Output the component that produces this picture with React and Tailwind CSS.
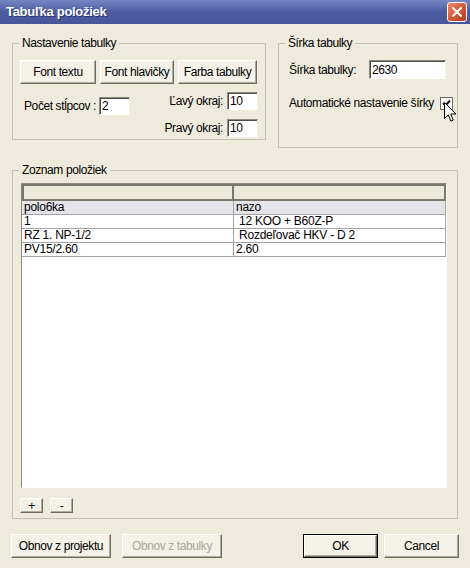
import React from 'react'

const FONT = "font-['Liberation_Sans',Arial,sans-serif]"

function Btn({ children, className = '', disabled, isDefault }) {
  const base =
    'flex items-center justify-center bg-[#f3f1e8] border border-t-white border-l-white border-b-[#6e6c61] border-r-[#6e6c61] shadow-[inset_-1px_-1px_0_#aeab9c]'
  const text = disabled ? 'text-[#a9a698]' : 'text-black'
  if (isDefault) {
    return (
      <div className={`border border-black ${className}`}>
        <button className={`${base} ${text} w-full h-full`}>{children}</button>
      </div>
    )
  }
  return <button className={`${base} ${text} ${className}`}>{children}</button>
}

function TextInput({ value, className = '' }) {
  return (
    <div
      className={`bg-white border border-t-[#8d8b7f] border-l-[#8d8b7f] border-b-white border-r-[#f4f3ee] shadow-[inset_1px_1px_0_#4e4d46] pl-[2px] flex items-center leading-[14px] ${className}`}
    >
      {value}
    </div>
  )
}

function GroupBox({ title, className = '', children }) {
  return (
    <fieldset className={`border border-[#c2bfae] ${className}`}>
      <legend className="ml-[6px] px-[3px] leading-[14px]">{title}</legend>
      {children}
    </fieldset>
  )
}

const rows = [
  ['polo6ka', 'nazo'],
  ['1', ' 12 KOO + B60Z-P'],
  ['RZ 1. NP-1/2', ' Rozdeľovač HKV - D 2'],
  ['PV15/2.60', '2.60'],
]

export default function App() {
  return (
    <div
      className={`relative w-[470px] h-[568px] overflow-hidden bg-[#eeebdc] flex flex-col ${FONT} text-[12px] tracking-[-0.4px] text-black`}
    >
      {/* Title bar */}
      <div className="h-[24px] shrink-0 flex items-center justify-between pl-[6px] pr-[3px] bg-gradient-to-b from-[#7685c3] via-[#4e5da2] to-[#46549a]">
        <span className="text-white font-bold text-[13px] tracking-[-0.3px] [text-shadow:1px_1px_0_#2b3570]">
          Tabuľka položiek
        </span>
        <button className="w-[20px] h-[20px] rounded-[3px] border border-white bg-gradient-to-br from-[#e98b6c] via-[#d55a3a] to-[#b8391f] flex items-center justify-center">
          <svg width="12" height="12" viewBox="0 0 12 12">
            <path d="M2 2l8 8M10 2l-8 8" stroke="white" strokeWidth="2" strokeLinecap="round" />
          </svg>
        </button>
      </div>

      {/* Top group boxes */}
      <div className="flex items-start gap-[12px] px-[12px] mt-[12px]">
        <GroupBox title="Nastavenie tabulky" className="w-[254px] h-[104px]">
          <div className="pl-[7px] pr-[7px] pt-[10px]">
            <div className="flex gap-[4px]">
              <Btn className="w-[76px] h-[24px]">Font textu</Btn>
              <Btn className="w-[74px] h-[24px]">Font hlavičky</Btn>
              <Btn className="w-[79px] h-[24px]">Farba tabulky</Btn>
            </div>
            <div className="flex items-start mt-[8px]">
              <div className="flex items-center mt-[5px] ml-[4px]">
                <span>Počet stĺpcov :</span>
                <TextInput value="2" className="w-[31px] h-[18px] ml-[3px]" />
              </div>
              <div className="ml-auto flex flex-col items-end gap-[9px]">
                <div className="flex items-center">
                  <span>Ľavý okraj:</span>
                  <TextInput value="10" className="w-[31px] h-[18px] ml-[4px]" />
                </div>
                <div className="flex items-center">
                  <span>Pravý okraj:</span>
                  <TextInput value="10" className="w-[31px] h-[18px] ml-[4px]" />
                </div>
              </div>
            </div>
          </div>
        </GroupBox>

        <GroupBox title="Šírka tabulky" className="w-[180px] h-[112px]">
          <div className="pl-[10px] pt-[10px]">
            <div className="flex items-center">
              <span className="w-[80px]">Šírka tabulky:</span>
              <TextInput value="2630" className="w-[77px] h-[19px]" />
            </div>
            <div className="flex items-center mt-[15px]">
              <span>Automatické nastavenie šírky</span>
              <div className="ml-[6px] w-[13px] h-[13px] bg-white border border-[#6f6e66] flex items-center justify-center">
                <svg width="9" height="9" viewBox="0 0 9 9">
                  <path d="M1 4l2.5 2.5L8 1.5" stroke="#111" strokeWidth="2" fill="none" />
                </svg>
              </div>
            </div>
          </div>
        </GroupBox>
      </div>

      {/* Items list */}
      <GroupBox title="Zoznam položiek" className="mx-[12px] mt-[15px] h-[356px]">
        <div className="ml-[8px] mt-[6px] w-[426px] h-[305px] bg-white border border-t-[#8d8b7f] border-l-[#8d8b7f] border-b-white border-r-white flex flex-col tracking-[-0.25px]">
          <div className="flex h-[17px] bg-[#ece9d8] border-2 border-[#7b796d]">
            <div className="w-[210px] border-r-2 border-[#7b796d]" />
            <div className="flex-1" />
          </div>
          {rows.map((r, i) => (
            <div
              key={i}
              className={`flex h-[14px] leading-[13px] border-b border-r border-[#a3a3a3] ${i === 0 ? 'bg-[#e3e3e8]' : 'bg-white'}`}
            >
              <div className="w-[212px] pl-[2px] border-r border-[#a3a3a3] whitespace-pre">{r[0]}</div>
              <div className="flex-1 pl-[2px] whitespace-pre">{r[1]}</div>
            </div>
          ))}
        </div>
        <div className="flex gap-[7px] ml-[7px] mt-[10px]">
          <Btn className="w-[23px] h-[15px] leading-none">+</Btn>
          <Btn className="w-[23px] h-[15px] leading-none">-</Btn>
        </div>
      </GroupBox>

      {/* Bottom buttons */}
      <div className="flex items-center px-[11px] mt-[15px]">
        <Btn className="w-[100px] h-[24px]">Obnov z projektu</Btn>
        <Btn disabled className="w-[100px] h-[24px] ml-[11px]">Obnov z tabulky</Btn>
        <Btn isDefault className="w-[75px] h-[24px] ml-auto">OK</Btn>
        <Btn className="w-[75px] h-[24px] ml-[6px]">Cancel</Btn>
      </div>

      {/* Mouse pointer over the checkbox */}
      <svg className="absolute left-[444px] top-[102px]" width="13" height="21" viewBox="0 0 13 21">
        <path
          d="M0.5 0.5v16l3.8-3.6 2.6 6.2 2.4-1-2.6-6.1h5.3z"
          fill="white"
          stroke="black"
          strokeWidth="1"
          strokeLinejoin="miter"
        />
      </svg>
    </div>
  )
}
